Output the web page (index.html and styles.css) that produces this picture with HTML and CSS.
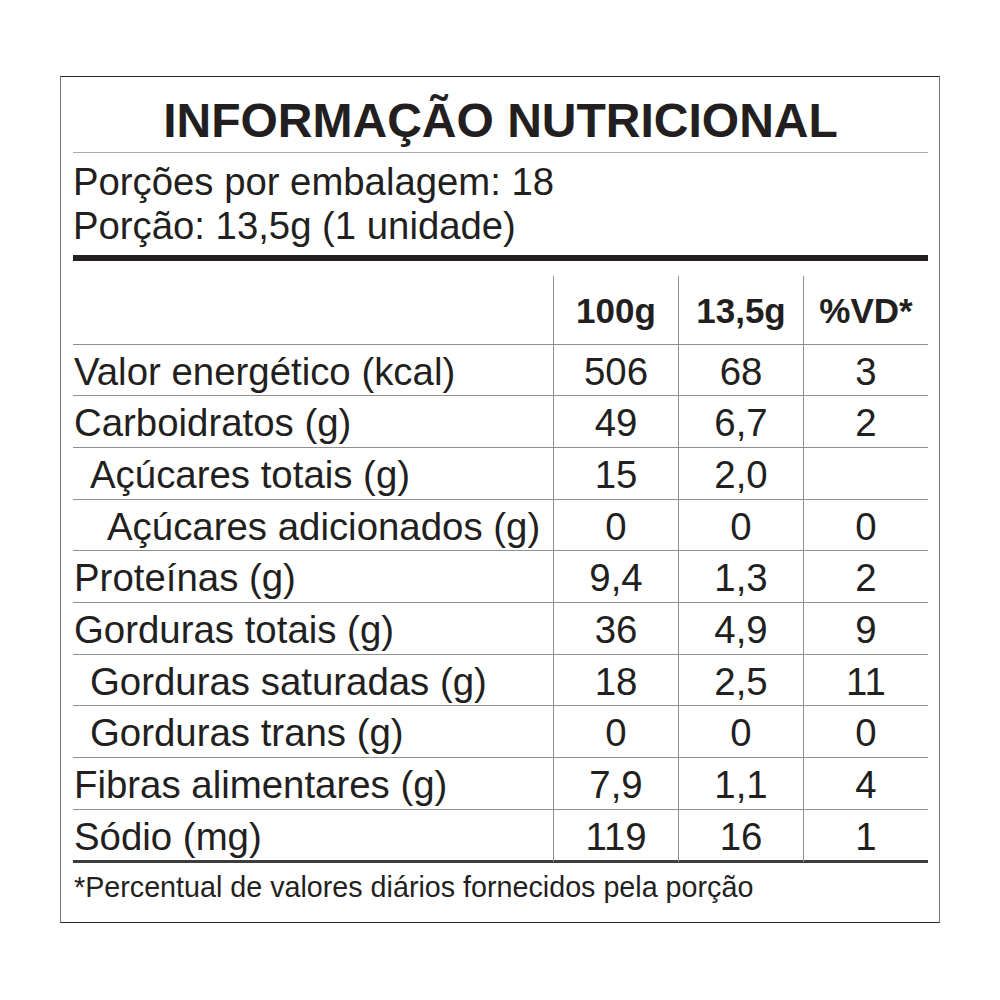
FILE: index.html
```html
<!DOCTYPE html>
<html lang="pt-BR">
<head>
<meta charset="utf-8">
<title>Informação Nutricional</title>
<link rel="stylesheet" href="styles.css">
</head>
<body>
<div class="label">
  <h1 class="title">INFORMAÇÃO NUTRICIONAL</h1>
  <div class="serving">
    <p>Porções por embalagem: 18</p>
    <p>Porção: 13,5g (1 unidade)</p>
  </div>
  <div class="facts">
    <div class="row head">
      <div class="cell name"></div>
      <div class="cell">100g</div>
      <div class="cell">13,5g</div>
      <div class="cell">%VD*</div>
    </div>
    <div class="row">
      <div class="cell name">Valor energético (kcal)</div>
      <div class="cell">506</div><div class="cell">68</div><div class="cell">3</div>
    </div>
    <div class="row">
      <div class="cell name">Carboidratos (g)</div>
      <div class="cell">49</div><div class="cell">6,7</div><div class="cell">2</div>
    </div>
    <div class="row">
      <div class="cell name sub">Açúcares totais (g)</div>
      <div class="cell">15</div><div class="cell">2,0</div><div class="cell"></div>
    </div>
    <div class="row">
      <div class="cell name subsub">Açúcares adicionados (g)</div>
      <div class="cell">0</div><div class="cell">0</div><div class="cell">0</div>
    </div>
    <div class="row">
      <div class="cell name">Proteínas (g)</div>
      <div class="cell">9,4</div><div class="cell">1,3</div><div class="cell">2</div>
    </div>
    <div class="row">
      <div class="cell name">Gorduras totais (g)</div>
      <div class="cell">36</div><div class="cell">4,9</div><div class="cell">9</div>
    </div>
    <div class="row">
      <div class="cell name sub">Gorduras saturadas (g)</div>
      <div class="cell">18</div><div class="cell">2,5</div><div class="cell">11</div>
    </div>
    <div class="row">
      <div class="cell name sub">Gorduras trans (g)</div>
      <div class="cell">0</div><div class="cell">0</div><div class="cell">0</div>
    </div>
    <div class="row">
      <div class="cell name">Fibras alimentares (g)</div>
      <div class="cell">7,9</div><div class="cell">1,1</div><div class="cell">4</div>
    </div>
    <div class="row last">
      <div class="cell name">Sódio (mg)</div>
      <div class="cell">119</div><div class="cell">16</div><div class="cell">1</div>
    </div>
  </div>
  <p class="note">*Percentual de valores diários fornecidos pela porção</p>
</div>
</body>
</html>
```
FILE: styles.css
```css
html, body {
  margin: 0;
  padding: 0;
  background: #ffffff;
}

body {
  padding: 76px 0 0 60px;
  font-family: "Liberation Sans", Arial, sans-serif;
  color: #231f20;
}

.label {
  box-sizing: border-box;
  width: 880px;
  height: 847px;
  border-top: 1px solid #2a2a2a;
  border-bottom: 1px solid #2a2a2a;
  border-left: 1px solid #777777;
  border-right: 1px solid #777777;
  padding: 16px 11px 15px 12px;
}

.title {
  margin: 0;
  padding-bottom: 3px;
  font-size: 48px;
  font-weight: bold;
  line-height: 56px;
  text-align: center;
  border-bottom: 1.5px solid #a7a9ac;
}

.serving {
  padding-top: 6.5px;
  padding-bottom: 7px;
  border-bottom: 6px solid #231f20;
}

.serving p {
  margin: 0;
  font-size: 38.3px;
  line-height: 44px;
}

.facts {
  margin-top: 15px;
}

.row {
  display: grid;
  grid-template-columns: 480px 125px 125px 125px;
  height: 50.7px;
  border-bottom: 1px solid #8f8f8f;
}

.row.head {
  height: 68px;
}

.row.last {
  border-bottom: 3px solid #3d3d3d;
}

.cell {
  font-size: 38.4px;
  line-height: 50.7px;
  padding-top: 2px;
  text-align: center;
  white-space: nowrap;
  border-left: 1px solid #8f8f8f;
}

.cell.name {
  border-left: none;
  text-align: left;
  padding-left: 1px;
}

.cell.name.sub {
  padding-left: 17px;
}

.cell.name.subsub {
  padding-left: 34px;
}

.head .cell {
  font-size: 35px;
  font-weight: bold;
  line-height: 68px;
  padding-top: 1px;
}

.note {
  margin: 4px 0 0 0;
  padding-left: 1px;
  font-size: 28.7px;
  line-height: 40px;
}
```
